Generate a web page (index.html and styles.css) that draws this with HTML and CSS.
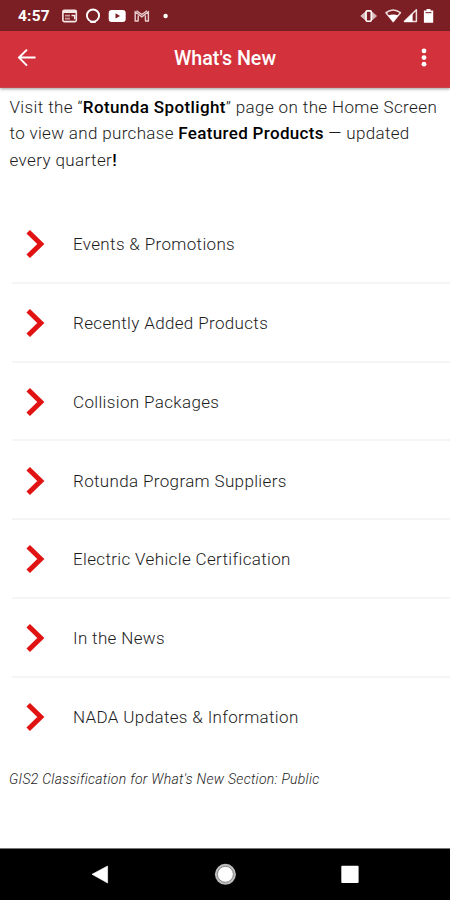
FILE: index.html
```
<!DOCTYPE html>
<html lang="en">
<head>
<meta charset="utf-8">
<title>What's New</title>
<link rel="stylesheet" href="styles.css">
</head>
<body>
<div class="screen">
  <div class="status">
    <span class="time">4:57</span>
    <svg class="notifications" width="112" height="18" viewBox="0 0 112 18" fill="none">
      <rect x="1.9" y="3.2" width="13.4" height="11.4" rx="1.3" stroke="#f5e6e6" stroke-width="1.6"/>
      <path d="M2 5h13" stroke="#f5e6e6" stroke-width="2"/>
      <path d="M4 8.6h5M4 11.6h5" stroke="#c99a9c" stroke-width="1.6"/>
      <path d="M10.5 8.6h3.2v3.6" stroke="#f5e6e6" stroke-width="1.5"/>
      <circle cx="32" cy="8.6" r="6.1" stroke="#fff" stroke-width="1.9"/>
      <path d="M29.3 15h5.4" stroke="#fff" stroke-width="2"/>
      <rect x="47.7" y="3" width="17" height="12" rx="3" fill="#fff"/>
      <path d="M54.5 6.3v5.2l4.6-2.6z" fill="#7c1f24"/>
      <path d="M74.2 13.8V4.8l6.6 5 6.6-5v9M77.2 13.8V8.5M84.4 13.8V8.5M73.6 14h4M84 14h4M75.5 3.7l5.3 3.8 5.3-3.8" stroke="#ead0d1" stroke-width="1.4"/>
      <circle cx="104.6" cy="9" r="2.2" fill="#fff"/>
    </svg>
    <svg class="system" width="76" height="18" viewBox="0 0 76 18" fill="none">
      <path d="M7 4.6L1.8 9 7 13.4zM12.5 4.6L17.5 9l-5 4.4z" fill="#d9bcbd" stroke="#d9bcbd" stroke-linejoin="round"/>
      <rect x="7.1" y="3.9" width="5.2" height="10.4" rx="1.2" fill="#7c1f24" stroke="#fff" stroke-width="1.6"/>
      <path d="M27 5.7q7.2-5.6 14.4 0L34.2 14.6z" stroke="#eedddd" stroke-width="1.5" stroke-linejoin="round"/>
      <path d="M29.2 8.4q5-2 10 0L34.2 14.8z" fill="#fff"/>
      <path d="M45.5 14.4H57.4V2.8z" stroke="#eedddd" stroke-width="1.5" stroke-linejoin="round"/>
      <path d="M45 15h8.6V6.6z" fill="#fff"/>
      <path d="M67.5 2h4v1.5h2.7v12.2h-9.3V3.5h2.6z" fill="#fff"/>
      <path d="M66.5 5h6v1.2h-6z" fill="#8e4144"/>
    </svg>
  </div>
  <header class="bar">
    <svg width="20" height="20" viewBox="0 0 20 20" fill="none" stroke="#fff" stroke-width="2"><path d="M18.5 9.6H2.3M10 1.6l-8 8 8 8"/></svg>
    <h1>What's New</h1>
    <svg width="8" height="20" viewBox="0 0 8 20" fill="#fff"><circle cx="4" cy="2.9" r="2.4"/><circle cx="4" cy="9.6" r="2.4"/><circle cx="4" cy="16.2" r="2.4"/></svg>
  </header>
  <main>
    <p class="intro"><span class="l1">Visit the “<b>Rotunda Spotlight</b>” page on the Home Screen</span><br><span class="l2">to view and purchase <b>Featured Products</b> — updated</span><br>every quarter<b>!</b></p>
    <ul class="list">
      <li><svg class="chev" viewBox="0 0 20 30"><path d="M3.2 2.7L15.8 15 3.2 27.3"/></svg><span>Events &amp; Promotions</span></li>
      <li><svg class="chev" viewBox="0 0 20 30"><path d="M3.2 2.7L15.8 15 3.2 27.3"/></svg><span>Recently Added Products</span></li>
      <li><svg class="chev" viewBox="0 0 20 30"><path d="M3.2 2.7L15.8 15 3.2 27.3"/></svg><span>Collision Packages</span></li>
      <li><svg class="chev" viewBox="0 0 20 30"><path d="M3.2 2.7L15.8 15 3.2 27.3"/></svg><span>Rotunda Program Suppliers</span></li>
      <li><svg class="chev" viewBox="0 0 20 30"><path d="M3.2 2.7L15.8 15 3.2 27.3"/></svg><span>Electric Vehicle Certification</span></li>
      <li><svg class="chev" viewBox="0 0 20 30"><path d="M3.2 2.7L15.8 15 3.2 27.3"/></svg><span>In the News</span></li>
      <li><svg class="chev" viewBox="0 0 20 30"><path d="M3.2 2.7L15.8 15 3.2 27.3"/></svg><span>NADA Updates &amp; Information</span></li>
    </ul>
    <p class="note">GIS2 Classification for What's New Section: Public</p>
  </main>
  <nav class="nav">
    <svg width="450" height="51" viewBox="0 0 450 51">
      <path d="M92 25.3L107.6 17v17z" fill="#fff" stroke="#fff" stroke-width=".6" stroke-linejoin="round"/>
      <circle cx="225.4" cy="25.3" r="10.5" fill="#bdbdbd"/>
      <circle cx="225.4" cy="25.3" r="8" fill="#fff" stroke="#858585" stroke-width="1"/>
      <rect x="341.3" y="16.7" width="17.3" height="17.3" rx="1" fill="#fff"/>
    </svg>
  </nav>
</div>
</body>
</html>
```
FILE: styles.css
```
* { box-sizing: border-box; }
body { margin: 0; font-family: Roboto, "Liberation Sans", sans-serif; background: #fff; color: #1c1c1c; }
.screen { width: 450px; height: 900px; display: flex; flex-direction: column; overflow: hidden; }
svg { display: block; flex: none; }
.status { height: 31px; flex: none; display: flex; align-items: center; padding: 0 15px 0 18px; background: #7c1f24; color: #fff; }
.time { width: 32px; font-size: 15.5px; font-weight: 700; line-height: 18px; letter-spacing: .2px; white-space: nowrap; }
.notifications { margin-left: 11px; margin-top: 1px; }
.system { margin-left: auto; margin-top: 1px; }
.bar { height: 57px; flex: none; display: flex; align-items: center; justify-content: space-between; padding: 0 22px 2px 17px; background: #d3313c; border-bottom: 1px solid #c9434b; box-shadow: 0 1px 3px rgba(0, 0, 0, .4); color: #fff; }
.bar h1 { margin: 2px 0 0 -7px; font-size: 19.7px; font-weight: 500; line-height: 24px; }
main { flex: 1; padding-top: 6px; }
.intro { margin: 0 0 0 9.5px; height: 112px; font-size: 17px; font-weight: 300; line-height: 26.3px; letter-spacing: .38px; white-space: nowrap; }
.intro .l2 { letter-spacing: .33px; }
.intro b { font-weight: 500; color: #000; }
.list { margin: 0; padding: 0; list-style: none; }
.list li { height: 78.75px; margin-left: 12px; padding: 2px 0 0 13px; display: flex; align-items: center; border-bottom: 2px solid #f5f5f5; font-size: 17px; font-weight: 300; letter-spacing: .35px; white-space: nowrap; }
.list li:first-child { height: 77.75px; padding-top: 1px; }
.list li:last-child { border-bottom: 0; padding-top: 1px; }
.chev { width: 20px; height: 30px; fill: none; stroke: #e01212; stroke-width: 5; }
.list span { margin-left: 28px; }
.note { margin: 13px 0 0 9px; font-size: 14px; font-style: italic; font-weight: 300; line-height: 20px; letter-spacing: .28px; white-space: nowrap; }
.nav { height: 52px; flex: none; background: #000; border-top: 1px solid #777; }
```
